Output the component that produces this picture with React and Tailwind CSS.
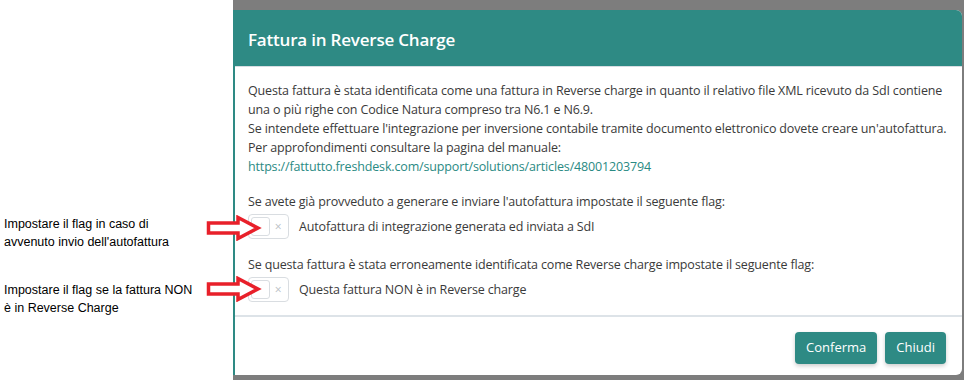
import React from "react";

const font = { fontFamily: '"Open Sans", "Noto Sans", sans-serif' };

function Toggle() {
  return (
    <div className="flex items-center w-[41px] h-[25px] border border-[#d9dde1] rounded-[4px] bg-white px-[2px] shrink-0">
      <div className="w-[19px] h-[19px] border border-[#d9dde1] rounded-[3px] bg-white" />
      <span className="flex-1 text-center text-[12px] leading-none text-[#b8bec4]">×</span>
    </div>
  );
}

function Arrow({ top }) {
  return (
    <svg className={`absolute left-[206px] ${top}`} width="56" height="26" viewBox="0 0 56 26">
      <path d="M2.5 8 H32 V2.5 L52 13 L32 23.5 V18 H2.5 Z" fill="white" stroke="#e8202a" strokeWidth="3.5" strokeLinejoin="miter" />
    </svg>
  );
}

export default function App() {
  return (
    <div className="relative flex w-[964px] h-[380px] bg-white overflow-hidden" style={font}>
      {/* annotations */}
      <div className="w-[233px] shrink-0 relative text-[12.5px] leading-[18px] text-black" style={{ fontFamily: '"Liberation Sans", Arial, sans-serif' }}>
        <div className="absolute left-[4px] top-[215px]">
          <div>Impostare il flag in caso di</div>
          <div>avvenuto invio dell'autofattura</div>
        </div>
        <div className="absolute left-[4px] top-[281px]">
          <div>Impostare il flag se la fattura NON</div>
          <div>è in Reverse Charge</div>
        </div>
      </div>

      {/* backdrop + modal */}
      <div className="flex-1 flex flex-col bg-[#7d7d7d]">
        <div className="h-[10px] shrink-0" />
        <div className="flex flex-col mr-[2px] bg-white border-l-2 border-[#2e8a84] rounded-tr-[6px] rounded-br-[6px] overflow-hidden h-[365px]">
          <div className="h-[56px] bg-[#2e8a84] flex items-center px-[13px] pt-[3px] shrink-0">
            <h2 className="text-white text-[17px] font-semibold tracking-[-0.2px]">Fattura in Reverse Charge</h2>
          </div>
          <div className="border-t border-[#d8dde2]" />
          <div className="px-[13px] pt-[14px] text-[12.5px] leading-[19px] text-[#3a3a3a] tracking-[-0.15px]">
            <p>Questa fattura è stata identificata come una fattura in Reverse charge in quanto il relativo file XML ricevuto da SdI contiene una o più righe con Codice Natura compreso tra N6.1 e N6.9.</p>
            <p>Se intendete effettuare l'integrazione per inversione contabile tramite documento elettronico dovete creare un'autofattura.</p>
            <p>Per approfondimenti consultare la pagina del manuale:</p>
            <a className="text-[#2a8a83]">https://fattutto.freshdesk.com/support/solutions/articles/48001203794</a>

            <p className="mt-[16px]">Se avete già provveduto a generare e inviare l'autofattura impostate il seguente flag:</p>
            <div className="flex items-center gap-[10px] mt-[3px]">
              <Toggle />
              <span>Autofattura di integrazione generata ed inviata a SdI</span>
            </div>

            <p className="mt-[16px]">Se questa fattura è stata erroneamente identificata come Reverse charge impostate il seguente flag:</p>
            <div className="flex items-center gap-[10px] mt-[3px]">
              <Toggle />
              <span>Questa fattura NON è in Reverse charge</span>
            </div>
          </div>
          <div className="mt-[13px] border-t-2 border-[#dde3e8]" />
          <div className="flex justify-end gap-[8px] px-[16px] pt-[15px]">
            <button className="h-[32px] px-[11px] rounded-[4px] bg-[#2e8a84] text-white text-[13px] shadow-[0_2px_4px_rgba(0,0,0,0.2)]">Conferma</button>
            <button className="h-[32px] px-[11px] rounded-[4px] bg-[#2e8a84] text-white text-[13px] shadow-[0_2px_4px_rgba(0,0,0,0.2)]">Chiudi</button>
          </div>
        </div>
      </div>

      <Arrow top="top-[215px]" />
      <Arrow top="top-[276px]" />
    </div>
  );
}
